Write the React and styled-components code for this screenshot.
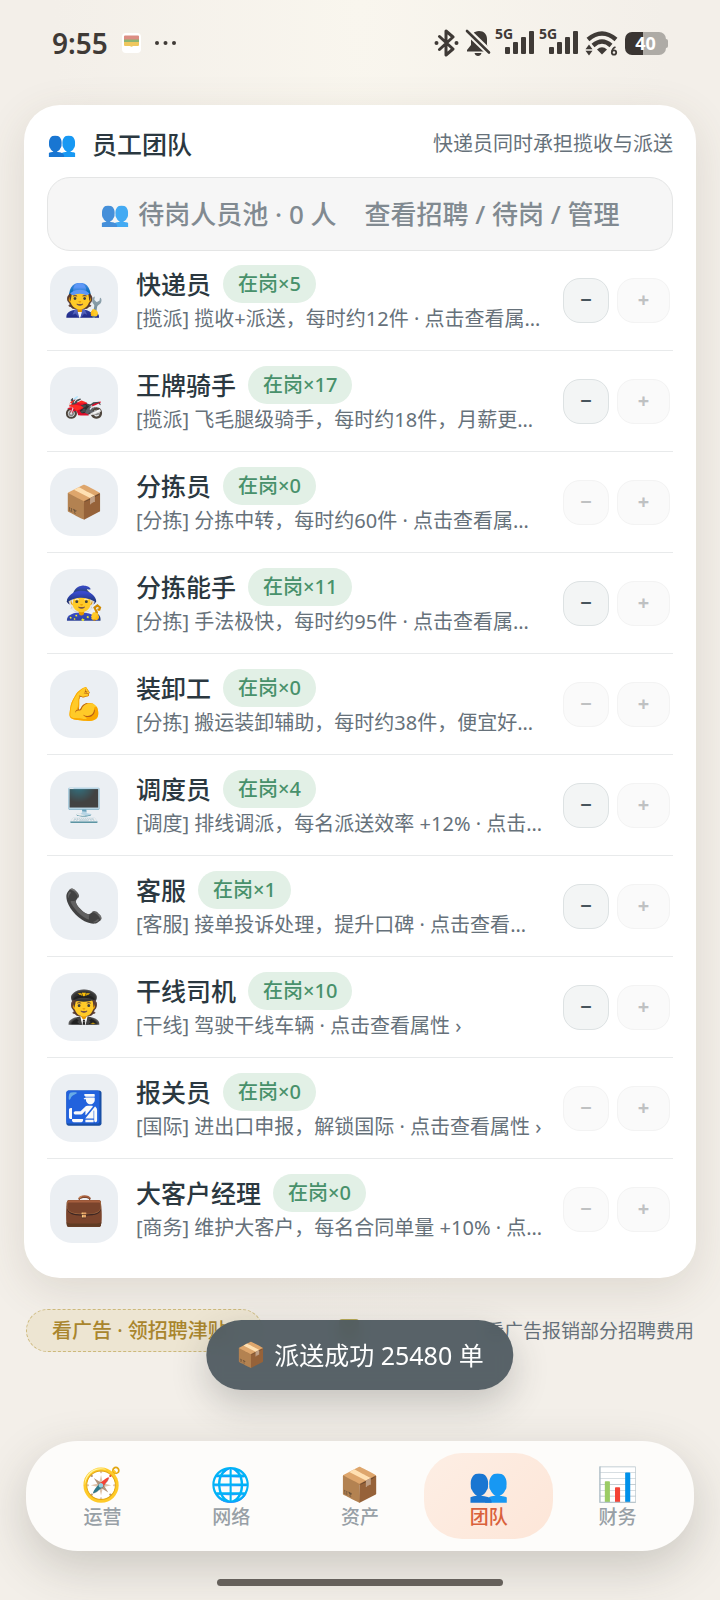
import React from 'react'
import styled, { createGlobalStyle } from 'styled-components'

const staff = [
  { icon: '🧑‍🔧', name: '快递员', count: 5, desc: '[揽派] 揽收+派送，每时约12件 · 点击查看属性 ›' },
  { icon: '🏍️', name: '王牌骑手', count: 17, desc: '[揽派] 飞毛腿级骑手，每时约18件，月薪更高 · 点击查看属性 ›' },
  { icon: '📦', name: '分拣员', count: 0, desc: '[分拣] 分拣中转，每时约60件 · 点击查看属性详情 ›' },
  { icon: '🧙', name: '分拣能手', count: 11, desc: '[分拣] 手法极快，每时约95件 · 点击查看属性详情 ›' },
  { icon: '💪', name: '装卸工', count: 0, desc: '[分拣] 搬运装卸辅助，每时约38件，便宜好用 · 点击查看属性 ›' },
  { icon: '🖥️', name: '调度员', count: 4, desc: '[调度] 排线调派，每名派送效率 +12% · 点击查看属性 ›' },
  { icon: '📞', name: '客服', count: 1, desc: '[客服] 接单投诉处理，提升口碑 · 点击查看属性 ›' },
  { icon: '🧑‍✈️', name: '干线司机', count: 10, desc: '[干线] 驾驶干线车辆 · 点击查看属性 ›' },
  { icon: '🛃', name: '报关员', count: 0, desc: '[国际] 进出口申报，解锁国际 · 点击查看属性 ›' },
  { icon: '💼', name: '大客户经理', count: 0, desc: '[商务] 维护大客户，每名合同单量 +10% · 点击查看属性 ›' },
]

const tabs = [
  { icon: '🧭', label: '运营' },
  { icon: '🌐', label: '网络' },
  { icon: '📦', label: '资产' },
  { icon: '👥', label: '团队', active: true },
  { icon: '📊', label: '财务' },
]

function Signal() {
  return (
    <SignalWrap>
      <Net>5G</Net>
      <svg width="30" height="24" viewBox="0 0 30 24" fill="#3f3a36">
        <rect x="0" y="16" width="5" height="7" rx="1" />
        <rect x="8" y="11" width="5" height="12" rx="1" />
        <rect x="16" y="6" width="5" height="17" rx="1" />
        <rect x="24" y="0" width="5" height="23" rx="1" />
      </svg>
    </SignalWrap>
  )
}

function StatusBar() {
  return (
    <StatusWrap>
      <StatusGroup>
        <Time>9:55</Time>
        <svg width="54" height="20" viewBox="0 0 54 20">
          <rect width="19" height="20" rx="4" fill="#fff" />
          <path d="M2 3.500a1 1 0 0 1 1-1h13a1 1 0 0 1 1 1V7H2z" fill="#dc8d83" />
          <rect x="2" y="6.500" width="15" height="3" fill="#8db573" />
          <path d="M2 9h15v3a1 1 0 0 1-1 1h-5q-1.500 1.500-3 0H3a1 1 0 0 1-1-1z" fill="#efc75e" />
          <g fill="#3f3a36">
            <circle cx="35" cy="10" r="2" />
            <circle cx="43.500" cy="10" r="2" />
            <circle cx="52" cy="10" r="2" />
          </g>
        </svg>
      </StatusGroup>
      <StatusGroup $tight>
        <svg width="25" height="28" viewBox="1 0 25 28" fill="none" stroke="#3f3a36" strokeWidth="3" strokeLinejoin="round" strokeLinecap="round">
          <path d="M6.500 7.500L20 20l-7 6V2l7 6L6.500 20.500" />
          <circle cx="3.500" cy="14" r="1" strokeWidth="2" />
          <circle cx="23.500" cy="14" r="1" strokeWidth="2" />
        </svg>
        <svg width="26" height="28" viewBox="0 0 26 28">
          <path d="M14 2c5 0 8 3.500 8 8v6l2 5v1.500H2V21l4-5v-5.500C6 5.500 9 2 14 2z" fill="#3f3a36" />
          <path d="M9.500 24h7c-.5 1.800-1.800 3-3.500 3s-3-1.200-3.500-3z" fill="#3f3a36" />
          <path d="M0 0l26 25" stroke="#f7f4ed" strokeWidth="7" />
          <path d="M2 2l22 21.500" stroke="#3f3a36" strokeWidth="2.600" strokeLinecap="round" />
        </svg>
        <Signal />
        <Signal />
        <svg width="34" height="28" viewBox="0 0 34 28" fill="none" stroke="#3f3a36">
          <path d="M3 10.500Q17-1.500 31 10.500" strokeWidth="4.400" />
          <path d="M8 16.500Q17 8.500 26 16.500" strokeWidth="4.400" />
          <path d="M12 20.500Q17 16 22 20.500L17 25.500z" fill="#3f3a36" stroke="none" />
          <path d="M4 15.500l3.500 4.700h-7zM4 26.500l3.500-4.700h-7z" fill="#3f3a36" stroke="none" />
          <circle cx="29" cy="23.500" r="2.200" strokeWidth="1.800" />
          <path d="M27 22.500q.5-3.500 3.500-4.500" strokeWidth="1.800" />
        </svg>
        <Battery>
          <BatteryBody>40</BatteryBody>
          <BatteryCap />
        </Battery>
      </StatusGroup>
    </StatusWrap>
  )
}

function StaffRow({ icon, name, count, desc }) {
  return (
    <Row>
      <Avatar>{icon}</Avatar>
      <Info>
        <NameLine>
          <Name>{name}</Name>
          <Badge>在岗×{count}</Badge>
        </NameLine>
        <Desc>{desc}</Desc>
      </Info>
      <Actions>
        <StepButton aria-label={`${name} 减少`} disabled={count === 0}>
          −
        </StepButton>
        <StepButton aria-label={`${name} 增加`} $wide disabled>
          +
        </StepButton>
      </Actions>
    </Row>
  )
}

function App() {
  return (
    <>
      <GlobalStyle />
      <Page>
        <StatusBar />
        <Card>
          <CardHead>
            <Title>
              <Emoji>👥</Emoji>员工团队
            </Title>
            <SubTitle>快递员同时承担揽收与派送</SubTitle>
          </CardHead>
          <PoolButton>
            <PoolText>
              <Emoji>👥</Emoji>待岗人员池 · 0 人
            </PoolText>
            <span>查看招聘 / 待岗 / 管理</span>
          </PoolButton>
          <List>
            {staff.map((item) => (
              <StaffRow key={item.name} {...item} />
            ))}
          </List>
        </Card>
        <Promo>
          <AdButton>看广告 · 领招聘津贴</AdButton>
          <Coupon />
          <PromoHint>看广告报销部分招聘费用</PromoHint>
          <Toast role="status">
            <Emoji>📦</Emoji>派送成功 25480 单
          </Toast>
        </Promo>
        <TabBar>
          {tabs.map((tab) => (
            <Tab key={tab.label} $active={tab.active}>
              <TabIcon>{tab.icon}</TabIcon>
              {tab.label}
            </Tab>
          ))}
        </TabBar>
        <HomeIndicator />
      </Page>
    </>
  )
}

const GlobalStyle = createGlobalStyle`
  * {
    box-sizing: border-box;
  }
  body {
    margin: 0;
    background: #f3efe9;
  }
  body, button {
    font-family: 'Noto Sans', 'Noto Sans CJK SC', sans-serif;
  }
  button {
    cursor: pointer;
  }
`

const Page = styled.div`
  display: flex;
  flex-direction: column;
  min-height: 100vh;
  padding: 0 24px 13px;
  overflow: hidden;
  background: radial-gradient(ellipse at 50% 0, #f9f6ee 0, #f3efe9 60%);
`

const StatusWrap = styled.div`
  display: flex;
  justify-content: space-between;
  align-items: center;
  height: 88px;
  padding: 0 28px 2px;
  margin-bottom: 17px;
  color: #3f3a36;
`

const StatusGroup = styled.div`
  display: flex;
  align-items: center;
  gap: ${({ $tight }) => ($tight ? '6px' : '14px')};
`

const Time = styled.span`
  font-size: 28px;
  line-height: 32px;
  font-weight: 600;
`

const SignalWrap = styled.div`
  display: flex;
  position: relative;
  padding-left: 8px;
`

const Net = styled.span`
  position: absolute;
  left: -2px;
  top: -4px;
  font-size: 14px;
  line-height: 14px;
  font-weight: 700;
`

const Battery = styled.div`
  display: flex;
  align-items: center;
`

const BatteryBody = styled.div`
  width: 41px;
  height: 23px;
  border-radius: 7px;
  background: linear-gradient(90deg, #3a3532 44%, #aeaba6 44%);
  color: #fff;
  font-size: 18px;
  line-height: 23px;
  font-weight: 700;
  text-align: center;
`

const BatteryCap = styled.div`
  width: 2px;
  height: 9px;
  border-radius: 0 2px 2px 0;
  background: #aeaba6;
`

const Emoji = styled.span`
  font-family: 'Noto Color Emoji', sans-serif;
  font-size: 24px;
  line-height: 28px;
`

const Card = styled.section`
  padding: 19px 23px;
  border-radius: 36px;
  background: #fff;
  box-shadow: 0 12px 44px rgba(90, 80, 60, 0.14);
`

const CardHead = styled.header`
  display: flex;
  justify-content: space-between;
  align-items: center;
  height: 40px;
  margin-bottom: 13px;
`

const Title = styled.h2`
  display: flex;
  align-items: center;
  gap: 15px;
  margin: 0;
  font-size: 25px;
  line-height: 36px;
  font-weight: 500;
  color: #2b3840;
`

const SubTitle = styled.span`
  font-size: 20px;
  line-height: 32px;
  color: #66717a;
`

const PoolButton = styled.button`
  display: flex;
  justify-content: center;
  align-items: center;
  gap: 28px;
  width: 100%;
  height: 74px;
  border: 1px solid #e4e5e5;
  border-radius: 23px;
  background: #f6f6f6;
  font-size: 26px;
  line-height: 36px;
  font-weight: 500;
  color: #818a91;
`

const PoolText = styled.span`
  display: flex;
  align-items: center;
  gap: 8px;

  ${Emoji} {
    opacity: 0.8;
  }
`

const List = styled.ul`
  margin: 0;
  padding: 0;
  list-style: none;
`

const Row = styled.li`
  display: flex;
  align-items: center;
  gap: 18px;
  padding: 15px 3px;
  border-bottom: 1px solid #e8eaeb;

  &:first-child {
    padding-top: 14px;
  }
  &:last-child {
    border-bottom: 0;
  }
`

const Avatar = styled.div`
  display: flex;
  justify-content: center;
  align-items: center;
  flex: none;
  width: 68px;
  height: 68px;
  border-radius: 22px;
  background: #ebeff3;
  font-family: 'Noto Color Emoji', sans-serif;
  font-size: 32px;
  line-height: 38px;
`

const Info = styled.div`
  flex: 1;
  min-width: 0;
`

const NameLine = styled.div`
  display: flex;
  align-items: center;
  gap: 12px;
`

const Name = styled.span`
  font-size: 25px;
  line-height: 36px;
  font-weight: 500;
  color: #2b3840;
`

const Badge = styled.span`
  padding: 0 15px;
  border-radius: 19px;
  background: #e2f0e6;
  font-size: 20px;
  line-height: 38px;
  font-weight: 500;
  color: #48916b;
`

const Desc = styled.div`
  overflow: hidden;
  font-size: 20px;
  line-height: 32px;
  white-space: nowrap;
  text-overflow: ellipsis;
  color: #66717a;
`

const Actions = styled.div`
  display: flex;
  gap: 8px;
`

const StepButton = styled.button`
  width: ${({ $wide }) => ($wide ? '53px' : '46px')};
  height: 45px;
  padding: 0;
  border: 1px solid #dde2e3;
  border-radius: 17px;
  background: #f3f5f5;
  font-size: 20px;
  line-height: 28px;
  font-weight: 700;
  color: #47545c;

  &:disabled {
    border-color: #f3f3f3;
    background: #fafafa;
    color: #bfc1c2;
    cursor: default;
  }
`

const Promo = styled.div`
  display: flex;
  align-items: center;
  position: relative;
  margin-top: 31px;
  padding: 0 2px;
`

const AdButton = styled.button`
  height: 43px;
  padding: 0 34px 0 25px;
  border: 1px dashed #cdb97c;
  border-radius: 22px;
  background: #ede5d2;
  font-size: 20px;
  line-height: 32px;
  font-weight: 500;
  color: #a9852d;
`

const Coupon = styled.i`
  width: 20px;
  height: 24px;
  margin: 0 auto 0 76px;
  border-radius: 3px;
  background: #b5a855;
`

const PromoHint = styled.span`
  font-size: 19px;
  line-height: 28px;
  color: #66717a;
`

const Toast = styled.div`
  display: flex;
  align-items: center;
  gap: 8px;
  position: absolute;
  top: 11px;
  left: 50%;
  transform: translateX(-50%);
  height: 70px;
  padding: 0 30px;
  border-radius: 35px;
  background: rgba(78, 89, 96, 0.94);
  backdrop-filter: blur(8px);
  box-shadow: 0 14px 36px rgba(50, 55, 55, 0.24);
  font-size: 25px;
  line-height: 36px;
  white-space: nowrap;
  color: #fff;
`

const TabBar = styled.nav`
  display: flex;
  margin: 89px 2px 0;
  padding: 12px;
  border-radius: 52px;
  background: #fdfcfa;
  box-shadow: 0 16px 48px rgba(60, 60, 50, 0.22);
`

const Tab = styled.button`
  display: flex;
  flex: 1;
  flex-direction: column;
  align-items: center;
  gap: 2px;
  height: 86px;
  padding: 13px 0 0;
  border: 0;
  border-radius: 38px;
  background: ${({ $active }) =>
    $active ? 'linear-gradient(135deg, #fdeee4, #fde6d8)' : 'transparent'};
  font-size: 19px;
  line-height: 22px;
  font-weight: 500;
  color: ${({ $active }) => ($active ? '#d9603b' : '#98a0a6')};
`

const TabIcon = styled.span`
  font-family: 'Noto Color Emoji', sans-serif;
  font-size: 33px;
  line-height: 38px;
`

const HomeIndicator = styled.div`
  width: 286px;
  height: 7px;
  margin: 28px auto 0;
  border-radius: 4px;
  background: #65605b;
`

export default App
